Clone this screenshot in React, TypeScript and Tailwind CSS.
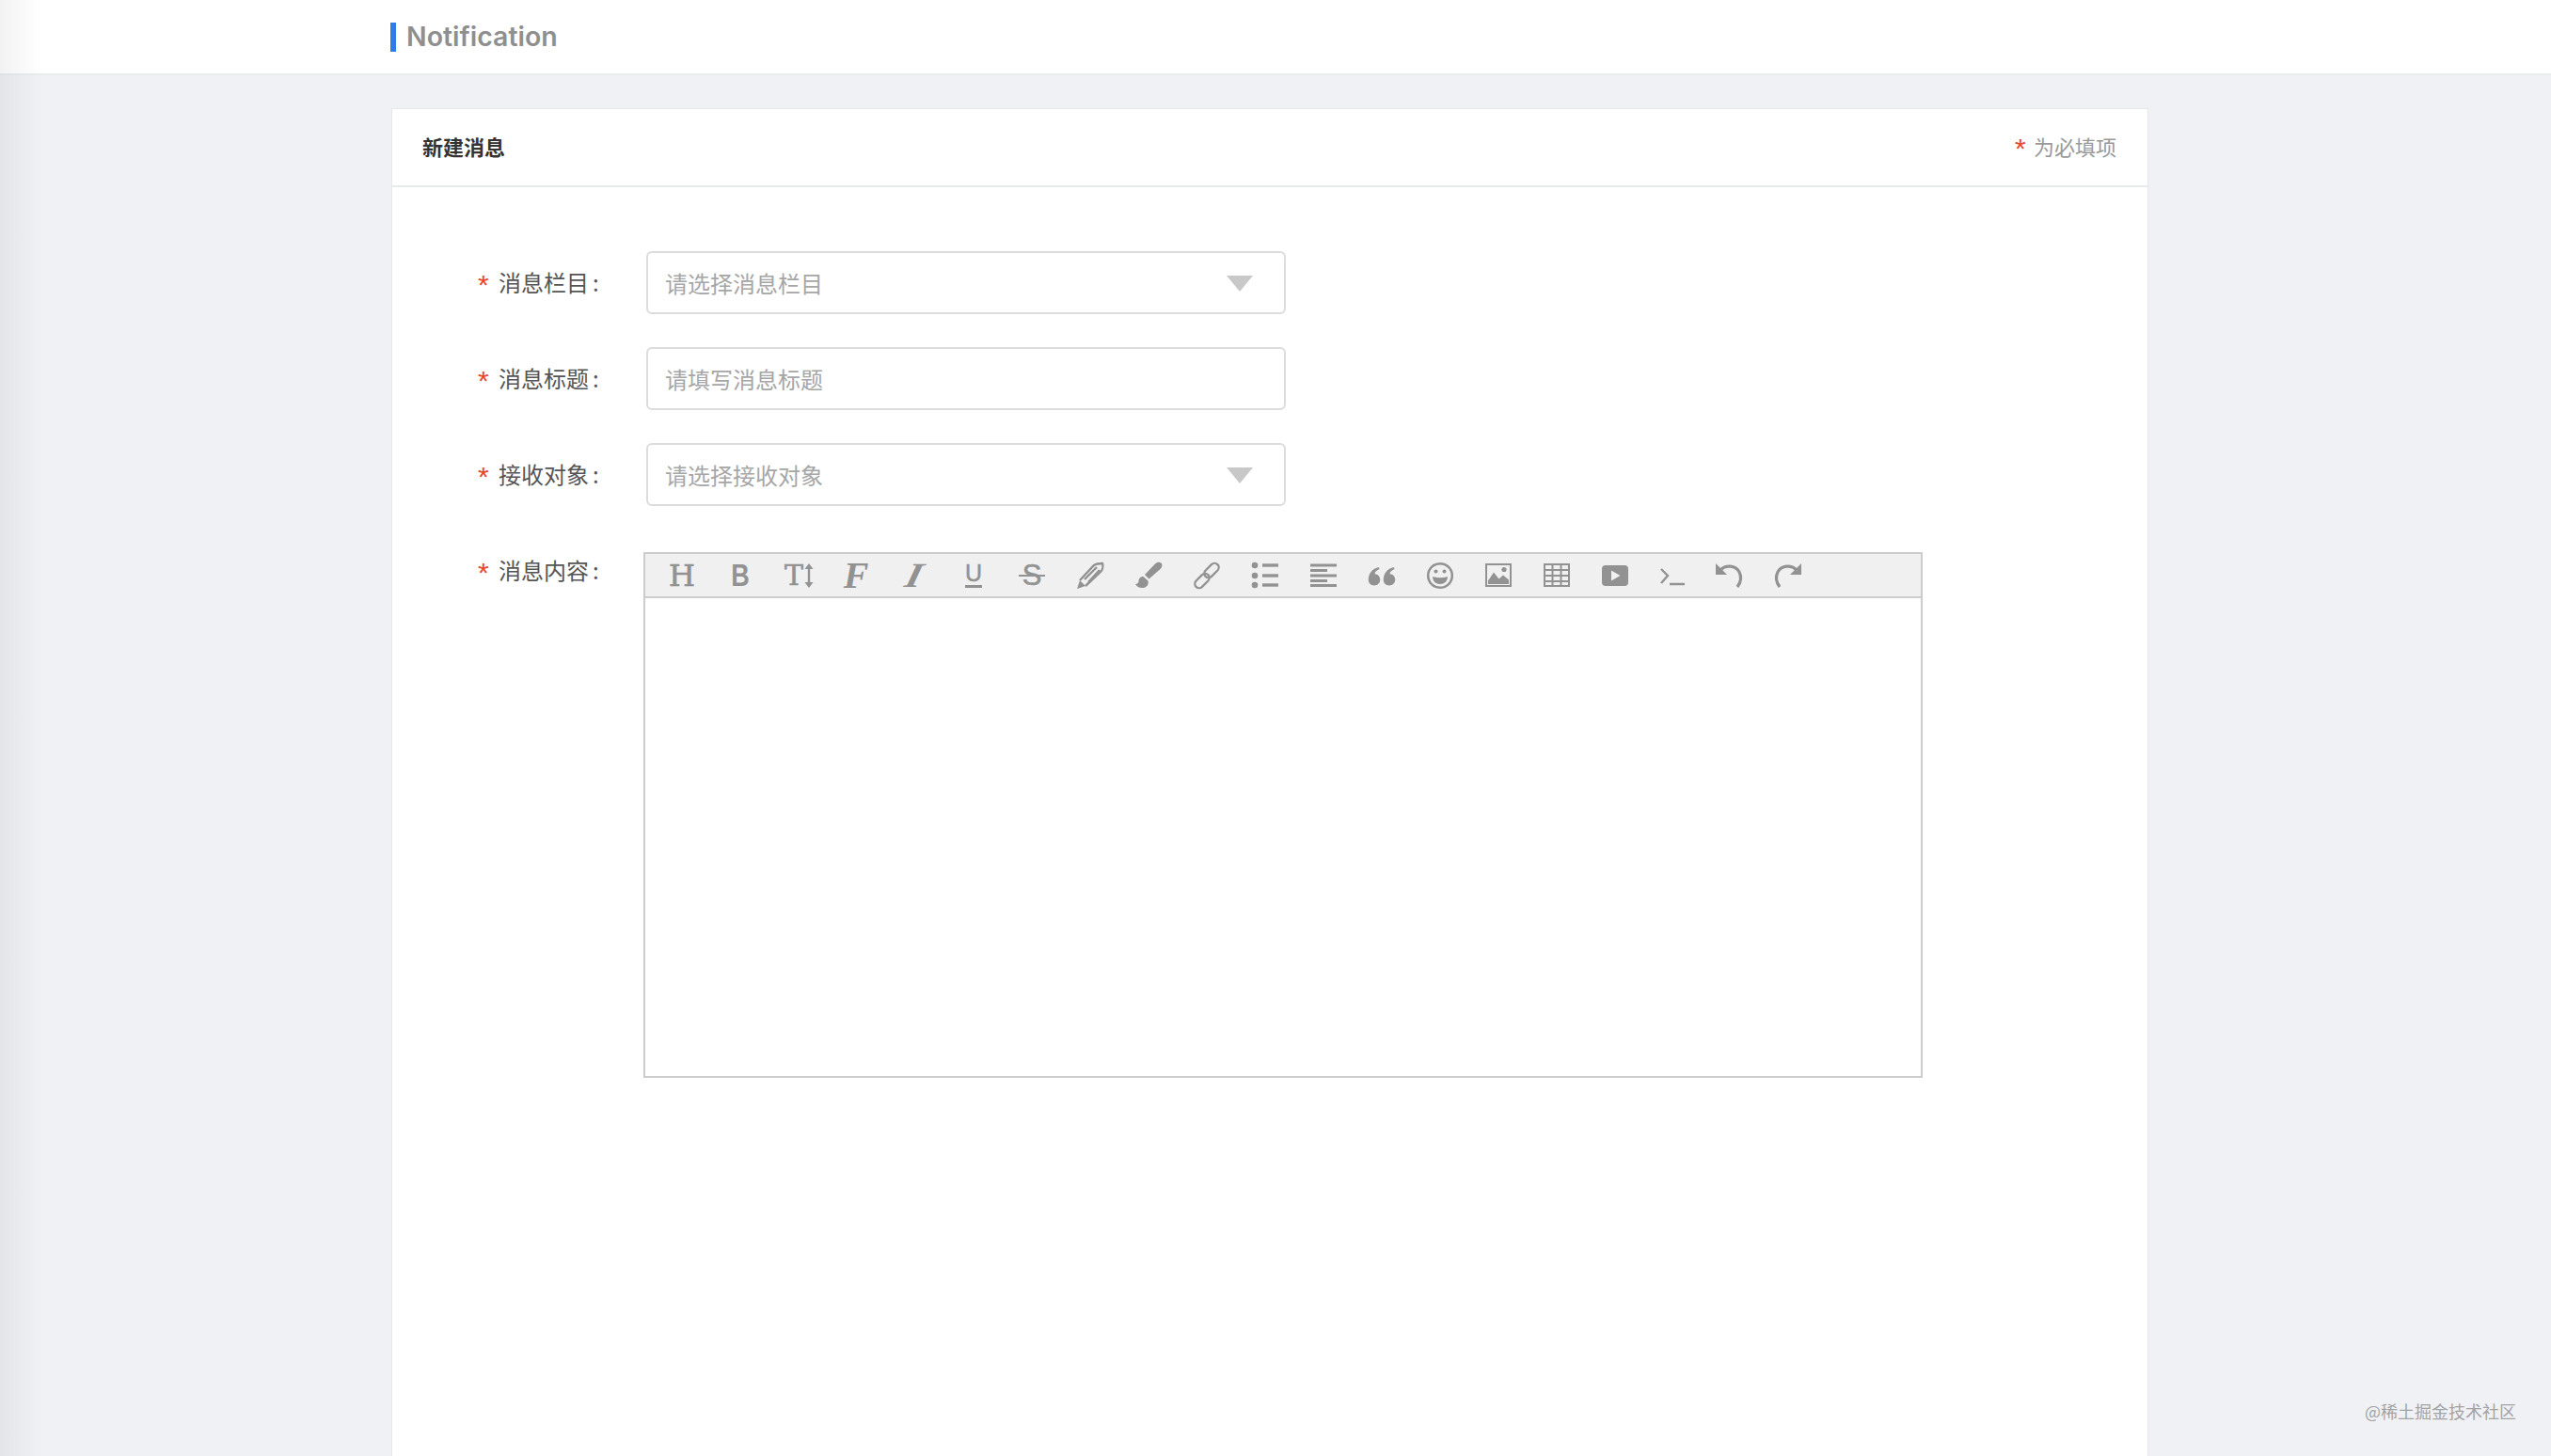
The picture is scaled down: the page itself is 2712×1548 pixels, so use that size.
import React from "react";

const CJK = "font-['Noto_Sans_CJK_SC',sans-serif]";

function Svg({ children }: { children: React.ReactNode }) {
  return (
    <svg width="32" height="32" viewBox="0 0 32 32" fill="currentColor" overflow="visible">
      {children}
    </svg>
  );
}

const IconH = () => <span className="font-['DejaVu_Serif',serif] text-[32px] leading-none [-webkit-text-stroke:0.7px_currentColor]">H</span>;
const IconB = () => <span className="font-['Liberation_Sans',sans-serif] font-bold text-[33px] leading-none scale-x-[0.82]">B</span>;
const IconT = () => (
  <span className="flex items-center gap-[1px] ml-[1px]">
    <span className="font-['DejaVu_Serif',serif] text-[30px] leading-none [-webkit-text-stroke:0.6px_currentColor]">T</span>
    <svg width="10" height="26" viewBox="0 0 10 26" fill="currentColor">
      <path d="M5 0 L9.5 6 H6.2 V20 H9.5 L5 26 L0.5 20 H3.8 V6 H0.5 Z" />
    </svg>
  </span>
);
const IconF = () => <span className="font-['Liberation_Serif',serif] font-bold italic text-[40px] leading-none -ml-[2px]">F</span>;
const IconI = () => <span className="font-['Liberation_Serif',serif] font-bold italic text-[37px] leading-none scale-x-[1.2] -skew-x-[12deg] -ml-[1px]">I</span>;
const IconU = () => (
  <span className="flex flex-col items-center">
    <span className="font-['Liberation_Sans',sans-serif] text-[25px] leading-[20px] [-webkit-text-stroke:0.5px_currentColor]">U</span>
    <span className="w-[18px] h-[3px] mt-[3px] bg-[#929292]" />
  </span>
);
const IconS = () => (
  <span className="relative flex items-center justify-center w-[28px]">
    <span className="font-['Liberation_Sans',sans-serif] text-[31px] leading-none [-webkit-text-stroke:0.6px_currentColor]">S</span>
    <span className="absolute left-0 right-0 top-1/2 h-[2px] -mt-[1px] bg-[#929292]" />
  </span>
);
const IconPencil = () => (
  <Svg>
    <path d="M2 30 L5 21 L11 27 Z" />
    <path d="M5 21 L20 5 C23 3 26 3 29 3 C30 6 29 10 27 12 L11 27" fill="none" stroke="currentColor" strokeWidth="2.4" />
    <path d="M10 20 L23 7 M14 23 L26 10" fill="none" stroke="currentColor" strokeWidth="2.4" />
  </Svg>
);
const IconBrush = () => (
  <Svg>
    <path d="M29.5 2.5 C27.5 1 25 1.5 23 3.5 L12 15 L16.5 19.5 L28.5 9 C30.5 7 31 4.5 29.5 2.5 Z" />
    <path d="M10.5 17 C7.5 17 5.5 19 5.5 22 C5.5 24 4 25 2 25 C3.5 28 7 29.5 10.5 29 C14.5 28.5 16.5 25 15.5 21.5 Z" />
  </Svg>
);
const IconLink = () => (
  <Svg>
    <g fill="none" stroke="currentColor" strokeWidth="2.3">
      <rect x="2" y="17" width="18" height="9" rx="4.5" transform="rotate(-45 11 21.5)" />
      <rect x="12" y="6" width="18" height="9" rx="4.5" transform="rotate(-45 21 10.5)" />
    </g>
  </Svg>
);
const IconUl = () => (
  <Svg>
    <circle cx="5" cy="5" r="3.3" />
    <circle cx="5" cy="16" r="3.3" />
    <circle cx="5" cy="26" r="3.3" />
    <rect x="13" y="3.3" width="17" height="3.4" />
    <rect x="13" y="14.3" width="17" height="3.4" />
    <rect x="13" y="24.3" width="17" height="3.4" />
  </Svg>
);
const IconAlign = () => (
  <Svg>
    <rect x="2" y="3.5" width="28" height="3" />
    <rect x="2" y="9" width="18" height="3" />
    <rect x="2" y="14.5" width="28" height="3" />
    <rect x="2" y="20" width="18" height="3" />
    <rect x="2" y="25" width="28" height="3" />
  </Svg>
);
const quote = "M1.8 20.5 C1.8 13.5 6 8.5 13 7 L13.5 9 C10 10.5 8.5 12.5 8.5 14.3 C11.8 14.5 14.2 17 14.2 20.2 C14.2 23.7 11.5 26.4 8 26.4 C4.3 26.4 1.8 24 1.8 20.5 Z";
const IconQuote = () => (
  <Svg>
    <path d={quote} />
    <path d={quote} transform="translate(16 0)" />
  </Svg>
);
const IconSmile = () => (
  <Svg>
    <circle cx="16" cy="16" r="12.8" fill="none" stroke="currentColor" strokeWidth="2.5" />
    <circle cx="11.5" cy="11.5" r="2" />
    <circle cx="20.5" cy="11.5" r="2" />
    <path d="M8 17 Q16 19.5 24 17 C24 22 20.5 25 16 25 C11.5 25 8 22 8 17 Z" />
  </Svg>
);
const IconImage = () => (
  <Svg>
    <rect x="3" y="4" width="26" height="23" fill="none" stroke="currentColor" strokeWidth="2" />
    <circle cx="22" cy="9.5" r="2.6" />
    <path d="M5 25 V21.5 L11 12.5 L16.5 19.5 L21 15.5 L27 20.5 V25 Z" />
  </Svg>
);
const IconTable = () => (
  <Svg>
    <path
      d="M3 4 H29 V27 H3 Z M3 10 H29 M3 16 H29 M3 22 H29 M11.5 4 V27 M20.5 4 V27"
      fill="none"
      stroke="currentColor"
      strokeWidth="2"
    />
  </Svg>
);
const IconVideo = () => (
  <Svg>
    <rect x="2" y="5" width="28" height="22" rx="4" />
    <path d="M12 10.5 L21.5 16 L12 21.5 Z" fill="#f0f0f0" />
  </Svg>
);
const IconCode = () => (
  <Svg>
    <path d="M3 9 L10 16 L3 24 M12 25 H28" fill="none" stroke="currentColor" strokeWidth="2.4" />
  </Svg>
);
const IconUndo = () => (
  <Svg>
    <g transform="translate(-2 0)">
      <path d="M1 3 L1 15 L13 15 Z" />
      <path d="M6 10 C12 4 22 5 26 12 C29 18 27 24 24 28" fill="none" stroke="currentColor" strokeWidth="3.2" />
    </g>
  </Svg>
);
const IconRedo = () => (
  <Svg>
    <g transform="translate(-3 0)">
      <path d="M31 3 L31 15 L19 15 Z" />
      <path d="M26 10 C20 4 10 5 6 12 C3 18 5 24 8 28" fill="none" stroke="currentColor" strokeWidth="3.2" />
    </g>
  </Svg>
);

const tools = [
  IconH, IconB, IconT, IconF, IconI, IconU, IconS, IconPencil, IconBrush, IconLink,
  IconUl, IconAlign, IconQuote, IconSmile, IconImage, IconTable, IconVideo, IconCode, IconUndo, IconRedo,
];

function Label({ text }: { text: string }) {
  return (
    <label className="flex items-center w-[179px] shrink-0 pb-[2px] text-[24px] text-[#555] leading-none">
      <span className="w-[22px] text-[#e8492c] font-['Liberation_Sans',sans-serif] text-[30px] leading-none pt-[6px]">*</span>
      <span>{text}</span>
      <span className="ml-[4px]">:</span>
    </label>
  );
}

function Field({ label, placeholder, select }: { label: string; placeholder: string; select?: boolean }) {
  return (
    <div className="flex items-center h-[67px]">
      <Label text={label} />
      <div className="relative w-[680px] h-[67px]">
        <input
          readOnly
          placeholder={placeholder}
          className="w-full h-full rounded-[6px] border-2 border-[#dcdcdc] bg-white pl-[18px] pr-[70px] pb-[1px] text-[24px] text-[#555] placeholder:text-[#a6a6a6] outline-none"
        />
        {select && (
          <span className="absolute right-[35px] top-[26px] w-0 h-0 border-x-[14px] border-x-transparent border-t-[17px] border-t-[#c8c8c8]" />
        )}
      </div>
    </div>
  );
}

export default function App() {
  return (
    <div className={`relative flex flex-col h-[1548px] overflow-hidden bg-[#f0f1f5] ${CJK}`}>
      <header className="flex items-center h-[80px] shrink-0 pl-[415px] bg-white border-b-2 border-[#ebecee]">
        <span className="w-[6px] h-[31px] bg-[#2f7be8]" />
        <h1 className="ml-[11px] font-['Inter',sans-serif] font-semibold text-[28.5px] text-[#8f8f8f] leading-none">Notification</h1>
      </header>

      <main className="flex flex-col flex-1 ml-[416px] w-[1868px] mt-[35px] bg-white border border-[#e6e7ea] border-b-0">
        <div className="flex items-center justify-between h-[83px] shrink-0 pl-[32px] pr-[33px] pb-[4px] border-b-2 border-[#e9eaec]">
          <h2 className="text-[22px] font-bold text-[#333] leading-none">新建消息</h2>
          <p className="flex items-center text-[22px] text-[#999] leading-none">
            <span className="w-[20px] text-[#e8492c] font-['Liberation_Sans',sans-serif] text-[30px] leading-none pt-[6px]">*</span>
            为必填项
          </p>
        </div>

        <form className="flex flex-col pl-[91px] pt-[68px]">
          <div className="flex flex-col gap-[35px]">
            <Field label="消息栏目" placeholder="请选择消息栏目" select />
            <Field label="消息标题" placeholder="请填写消息标题" />
            <Field label="接收对象" placeholder="请选择接收对象" select />
          </div>
          <div className="flex items-start mt-[49px]">
            <div className="flex h-[40px]">
              <Label text="消息内容" />
            </div>
            <div className="-ml-[3px] w-[1360px] h-[559px] border-2 border-[#cccccc] flex flex-col">
              <div className="flex items-center h-[45px] pl-[8px] bg-[#f0f0f0] border-b-2 border-[#cccccc] shrink-0 box-content text-[#929292]">
                {tools.map((Tool, i) => (
                  <span key={i} className="flex items-center justify-center w-[62px] h-[45px] shrink-0">
                    <Tool />
                  </span>
                ))}
              </div>
              <div className="flex-1 bg-white" />
            </div>
          </div>
        </form>
      </main>

      <div className="absolute left-0 top-0 bottom-0 w-[44px] bg-gradient-to-r from-[#0000000d] to-transparent pointer-events-none" />
      <div className="absolute right-[37px] bottom-[36px] text-[18px] leading-[24px] text-[#a3a3a3]">@稀土掘金技术社区</div>
    </div>
  );
}
